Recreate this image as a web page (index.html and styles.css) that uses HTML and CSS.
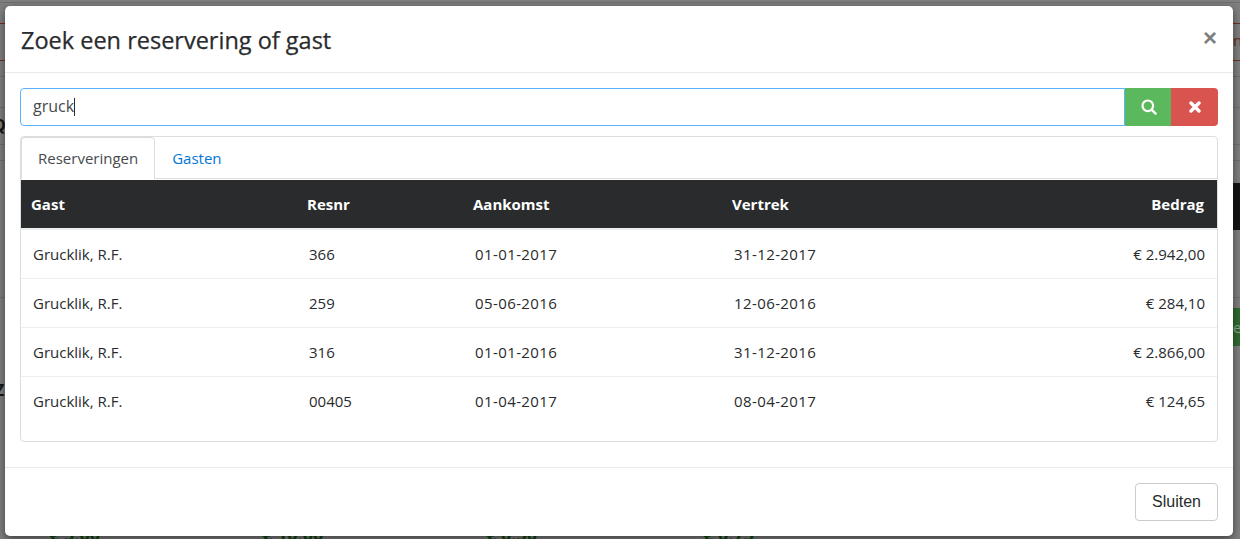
FILE: index.html
```html
<!DOCTYPE html>
<html lang="nl">
<head>
<meta charset="utf-8">
<title>Zoek een reservering of gast</title>
<link rel="stylesheet" href="styles.css">
</head>
<body>
<div class="backdrop">
  <div class="bg-q">Q</div>
  <div class="bg-z">Z</div>
  <div class="bg-n">n</div>
  <div class="bg-dark"></div>
  <div class="bg-green">er</div>
  <div class="bg-amount a1">€ 5,00</div>
  <div class="bg-amount a2">€ 10,00</div>
  <div class="bg-amount a3">€ 0,50</div>
  <div class="bg-amount a4">€ 0,75</div>
  <div class="modal">
    <header class="modal-header">
      <h4 class="modal-title">Zoek een reservering of gast</h4>
      <span class="close">×</span>
    </header>
    <div class="modal-body">
      <div class="search">
        <div class="search-input"><span class="query">gruck</span><i class="caret"></i></div>
        <button class="btn btn-green" type="button">
          <svg width="16" height="16" viewBox="0 0 16 16"><circle cx="6.800" cy="6.800" r="5.300" fill="none" stroke="#fff" stroke-width="2.200"/><path d="M10.800 10.800l3.800 3.800" stroke="#fff" stroke-width="2.400" stroke-linecap="round"/></svg>
        </button>
        <button class="btn btn-red" type="button">
          <svg width="12" height="12" viewBox="0 0 12 12"><path d="M2 2l8 8M10 2l-8 8" stroke="#fff" stroke-width="3.400" stroke-linecap="round"/></svg>
        </button>
      </div>
      <div class="panel">
        <nav class="tabs">
          <a class="tab active">Reserveringen</a>
          <a class="tab">Gasten</a>
        </nav>
        <table class="results">
          <thead>
            <tr><th class="c1">Gast</th><th class="c2">Resnr</th><th class="c3">Aankomst</th><th class="c4">Vertrek</th><th class="c5">Bedrag</th></tr>
          </thead>
          <tbody>
            <tr><td>Grucklik, R.F.</td><td>366</td><td class="date">01-01-2017</td><td class="date">31-12-2017</td><td class="num">€ 2.942,00</td></tr>
            <tr><td>Grucklik, R.F.</td><td>259</td><td class="date">05-06-2016</td><td class="date">12-06-2016</td><td class="num">€ 284,10</td></tr>
            <tr><td>Grucklik, R.F.</td><td>316</td><td class="date">01-01-2016</td><td class="date">31-12-2016</td><td class="num">€ 2.866,00</td></tr>
            <tr><td>Grucklik, R.F.</td><td>00405</td><td class="date">01-04-2017</td><td class="date">08-04-2017</td><td class="num">€ 124,65</td></tr>
          </tbody>
        </table>
      </div>
    </div>
    <footer class="modal-footer">
      <button class="btn-close" type="button">Sluiten</button>
    </footer>
  </div>
</div>
</body>
</html>
```
FILE: styles.css
```css
* { box-sizing: border-box; }
html, body { margin: 0; height: 100%; overflow: hidden; }
body { font-family: "Open Sans", "Noto Sans", sans-serif; color: #292b2c; }
.backdrop {
  position: relative; width: 1240px; height: 539px; overflow: hidden; padding: 6px 7px 0 5px;
  background-color: #7f7f7f;
  background-image:
    linear-gradient(#6f6f6f, #6f6f6f), linear-gradient(#6f6f6f, #6f6f6f), linear-gradient(#6f6f6f, #6f6f6f),
    linear-gradient(#6f6f6f, #6f6f6f), linear-gradient(#6f6f6f, #6f6f6f), linear-gradient(#6f6f6f, #6f6f6f),
    linear-gradient(#7a2a24, #7a2a24), linear-gradient(#7a2a24, #7a2a24);
  background-repeat: no-repeat;
  background-size: 100% 1px, 100% 1px, 100% 1px, 100% 1px, 100% 1px, 100% 1px, 100% 1px, 100% 1px;
  background-position: 0 2px, 0 76px, 0 107px, 0 144px, 0 160px, 0 297px, 0 23px, 0 60px;
}
.bg-q, .bg-z, .bg-n, .bg-green, .bg-amount { position: absolute; font-family: "Open Sans", sans-serif; }
.bg-q { left: -7px; top: 114px; font-size: 16px; font-weight: 700; color: #151515; }
.bg-z { left: -5px; top: 379px; font-size: 16px; font-weight: 700; color: #151515; }
.bg-n { left: 1233px; top: 30px; font-size: 15px; color: #6e2a22; }
.bg-dark { position: absolute; left: 1233px; top: 183px; width: 7px; height: 47px; background: #141414; }
.bg-green { left: 1233px; top: 308px; width: 7px; height: 38px; background: #2f6a2f; color: #8aa88a; font-size: 15px; line-height: 38px; overflow: hidden; }
.bg-amount { top: 524px; font-size: 18px; font-weight: 700; color: #0b4a0b; line-height: 20px; }
.a1 { left: 49px; } .a2 { left: 262px; } .a3 { left: 486px; } .a4 { left: 703px; }
.modal { position: relative; width: 1228px; height: 530px; background: #fff; border-radius: 5px; display: flex; flex-direction: column; box-shadow: 0 3px 9px rgba(0, 0, 0, .5); }
.modal-header { height: 67px; padding: 4px 15px 0; display: flex; align-items: center; justify-content: space-between; border-bottom: 1px solid #e9e9e9; }
.modal-title { margin: 0 0 0 1px; font-size: 23.5px; font-weight: 500; line-height: 1.5; color: #292b2c; -webkit-text-stroke: .25px #292b2c; }
.close { font-family: "Liberation Sans", sans-serif; font-size: 24px; font-weight: 700; color: #7f7f7f; line-height: 1; margin: -7px 1px 0 0; }
.modal-body { flex: 1; padding: 15px 15px 0; }
.search { display: flex; height: 38px; }
.search-input { flex: 1; border: 1px solid #5cb3fd; border-radius: 4px 0 0 4px; padding: 0 12px; font-size: 16px; color: #464a4c; display: flex; align-items: center; }
.query { margin-top: -2px; }
.caret { display: inline-block; width: 1px; height: 18px; background: #292b2c; }
.btn { border: 0; padding: 0; display: flex; align-items: center; justify-content: center; width: 47px; height: 38px; }
.btn-green { background: #5cb85c; width: 46px; padding-left: 2px; }
.btn-red { background: #d9534f; border-radius: 0 4px 4px 0; }
.panel { margin-top: 10px; height: 306px; border: 1px solid #ddd; border-radius: 4px; }
.tabs { display: flex; height: 42px; margin-bottom: 1px; border-bottom: 1px solid #ddd; }
.tab { padding: 1px 17px 0; font-size: 15px; line-height: 41px; color: #0275d8; }
.tab.active { color: #464a4c; background: #fff; border: 1px solid #ddd; border-bottom: 0; border-radius: 4px 4px 0 0; height: 42px; line-height: 41px; padding: 0 16px; }
.results { width: 100%; border-collapse: separate; border-spacing: 0; table-layout: fixed; font-size: 15px; }
.results th { background: #292b2c; color: #fff; height: 50px; text-align: left; font-weight: 700; padding: 0 10px; border-bottom: 2px solid #eceeef; background-clip: padding-box; }
.results td { height: 49px; padding: 0 12px; border-top: 1px solid #eceeef; }
.results tbody tr:first-child td { border-top: 0; height: 48px; }
.results .c1 { width: 276px; } .results .c2 { width: 166px; } .results .c3 { width: 259px; } .results .c4 { width: 260px; }
.results .c5 { text-align: right; padding-right: 13px; }
.results .num { text-align: right; }
.results .date { letter-spacing: .4px; }
.modal-footer { height: 69px; border-top: 1px solid #e9e9e9; padding: 15px; display: flex; justify-content: flex-end; }
.btn-close { width: 83px; height: 38px; background: #fff; border: 1px solid #ccc; border-radius: 4px; font-family: "Liberation Sans", sans-serif; font-size: 16px; color: #292b2c; padding: 0; }
```
